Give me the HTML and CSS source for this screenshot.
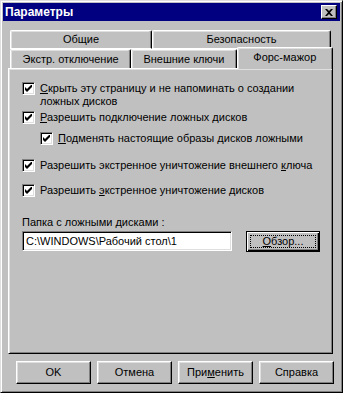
FILE: index.html
```html
<!DOCTYPE html>
<html lang="ru">
<head>
    <meta charset="UTF-8">
    <title>Параметры</title>
    <link rel="stylesheet" href="styles.css">
</head>
<body>
    <div class="window">
        <div class="titlebar">
            <span class="title">Параметры</span>
            <button class="close-btn">
                <svg width="8" height="7" viewBox="0 0 8 7"><path d="M0 0h2l2 2 2-2h2L5 3.5 8 7H6L4 5 2 7H0l3-3.5z" fill="#000"/></svg>
            </button>
        </div>

        <div class="tabs">
            <div class="tab-row back">
                <div class="tab t-general">Общие</div>
                <div class="tab t-security">Безопасность</div>
            </div>
            <div class="tab-row front">
                <div class="tab t-emergency">Экстр. отключение</div>
                <div class="tab t-keys">Внешние ключи</div>
                <div class="tab t-force active">Форс-мажор</div>
            </div>
        </div>

        <div class="panel">
            <label class="check row-1">
                <span class="box"><svg width="7" height="7" viewBox="0 0 7 7"><path d="M0 2v3l2 2 5-5V-1L2 4z" fill="#000"/></svg></span>
                <span class="text"><u>С</u>крыть эту страницу и не напоминать о создании<br>ложных дисков</span>
            </label>
            <label class="check row-2">
                <span class="box"><svg width="7" height="7" viewBox="0 0 7 7"><path d="M0 2v3l2 2 5-5V-1L2 4z" fill="#000"/></svg></span>
                <span class="text"><u>Р</u>азрешить подключение ложных дисков</span>
            </label>
            <label class="check row-3 sub">
                <span class="box"><svg width="7" height="7" viewBox="0 0 7 7"><path d="M0 2v3l2 2 5-5V-1L2 4z" fill="#000"/></svg></span>
                <span class="text"><u>П</u>одменять настоящие образы дисков ложными</span>
            </label>
            <label class="check row-4">
                <span class="box"><svg width="7" height="7" viewBox="0 0 7 7"><path d="M0 2v3l2 2 5-5V-1L2 4z" fill="#000"/></svg></span>
                <span class="text">Разрешить экстренное уничтожение внешнего <u>к</u>люча</span>
            </label>
            <label class="check row-5">
                <span class="box"><svg width="7" height="7" viewBox="0 0 7 7"><path d="M0 2v3l2 2 5-5V-1L2 4z" fill="#000"/></svg></span>
                <span class="text">Разрешить <u>э</u>кстренное уничтожение дисков</span>
            </label>

            <div class="folder-label">Папка с ложными дисками :</div>
            <div class="folder-row">
                <div class="field">C:\WINDOWS\Рабочий стол\1</div>
                <button class="btn browse"><span class="focus"><u>О</u>бзор...</span></button>
            </div>
        </div>

        <div class="buttons">
            <button class="btn">OK</button>
            <button class="btn">Отмена</button>
            <button class="btn">При<u>м</u>енить</button>
            <button class="btn">Справка</button>
        </div>
    </div>
</body>
</html>
```

FILE: styles.css
```css
body {
    margin: 0;
    background-color: #c0c0c0;
    font-family: "Liberation Sans", Arial, sans-serif;
    font-size: 11px;
    line-height: 13px;
    color: #000;
}

.window {
    box-sizing: border-box;
    width: 343px;
    height: 393px;
    padding: 1px;
    background-color: #c0c0c0;
    border-top: 1px solid #dfdfdf;
    border-left: 1px solid #dfdfdf;
    border-right: 1px solid #000;
    border-bottom: 1px solid #000;
    box-shadow: inset 1px 1px 0 #fff, inset -1px -1px 0 #808080;
}

u {
    text-decoration: underline;
    text-underline-offset: 1px;
}

/* Title bar */
.titlebar {
    height: 18px;
    margin: 1px 1px 0 1px;
    background-color: #000080;
    display: flex;
    align-items: center;
    justify-content: space-between;
    padding: 0 3px 0 2px;
}

.title {
    color: #fff;
    font-weight: bold;
    font-size: 12px;
    line-height: 14px;
}

.close-btn {
    box-sizing: border-box;
    width: 16px;
    height: 14px;
    padding: 0;
    background-color: #c0c0c0;
    border-top: 1px solid #fff;
    border-left: 1px solid #fff;
    border-right: 1px solid #000;
    border-bottom: 1px solid #000;
    box-shadow: inset -1px -1px 0 #808080;
    display: flex;
    align-items: center;
    justify-content: center;
}

/* Tabs */
.tabs {
    margin: 9px 0 0 6px;
    width: 325px;
}

.tab-row {
    display: flex;
    margin: 0 2px;
    height: 19px;
}

.tab {
    box-sizing: border-box;
    height: 100%;
    display: flex;
    align-items: center;
    justify-content: center;
    border-top: 1px solid #fff;
    border-left: 1px solid #fff;
    border-right: 1px solid #000;
    border-radius: 2px 2px 0 0;
    box-shadow: inset -1px 0 0 #808080, inset 1px 1px 0 #dfdfdf;
    background-color: #c0c0c0;
    padding-top: 1px;
}

.tab-row.back .tab {
    border-bottom: 1px solid #fff;
    padding-top: 0;
}

.t-general { width: 142px; }
.t-security { width: 179px; }
.t-emergency { width: 122px; }
.t-keys { width: 106px; }
.t-force { width: 93px; }

.tab.active {
    position: relative;
    z-index: 1;
    height: 22px;
    width: 97px;
    margin: -2px -2px -1px 0;
    align-items: flex-start;
    padding-top: 3px;
}

/* Panel */
.panel {
    box-sizing: border-box;
    margin-left: 6px;
    width: 325px;
    height: 286px;
    border-top: 1px solid #fff;
    border-left: 1px solid #fff;
    border-right: 1px solid #000;
    border-bottom: 1px solid #000;
    box-shadow: inset 1px 1px 0 #dfdfdf, inset -1px -1px 0 #808080;
    padding: 0 0 0 13px;
    display: flex;
    flex-direction: column;
    align-items: flex-start;
}

.check {
    display: flex;
    align-items: flex-start;
    gap: 5px;
}

.check .box {
    box-sizing: border-box;
    flex: none;
    width: 13px;
    height: 13px;
    background-color: #fff;
    border-top: 1px solid #808080;
    border-left: 1px solid #808080;
    border-right: 1px solid #fff;
    border-bottom: 1px solid #fff;
    box-shadow: inset 1px 1px 0 #000, inset -1px -1px 0 #dfdfdf;
    display: flex;
    align-items: center;
    justify-content: center;
}

.row-1 { margin-top: 13px; }
.row-2 { margin-top: 3px; }
.row-3 { margin-top: 8px; }
.row-4 { margin-top: 14px; }
.row-5 { margin-top: 12px; }

.check.sub {
    margin-left: 18px;
}

.folder-label {
    margin-top: 19px;
}

.folder-row {
    display: flex;
    align-items: flex-start;
    gap: 14px;
    margin-top: 2px;
}

.field {
    box-sizing: border-box;
    width: 210px;
    height: 20px;
    background-color: #fff;
    border-top: 1px solid #808080;
    border-left: 1px solid #808080;
    border-right: 1px solid #fff;
    border-bottom: 1px solid #fff;
    box-shadow: inset 1px 1px 0 #000, inset -1px -1px 0 #dfdfdf;
    padding: 3px 0 0 3px;
}

/* Buttons */
.btn {
    box-sizing: border-box;
    width: 75px;
    height: 23px;
    padding: 0;
    font-family: inherit;
    font-size: 11px;
    font-weight: normal;
    line-height: 13px;
    color: #000;
    background-color: #c0c0c0;
    border-top: 1px solid #fff;
    border-left: 1px solid #fff;
    border-right: 1px solid #000;
    border-bottom: 1px solid #000;
    box-shadow: inset -1px -1px 0 #808080, inset 1px 1px 0 #dfdfdf;
}

.btn.browse {
    width: 74px;
    height: 21px;
    border: 1px solid #000;
    box-shadow: inset 1px 1px 0 #fff, inset -1px -1px 0 #000, inset -2px -2px 0 #808080;
    display: flex;
    align-items: stretch;
    justify-content: stretch;
    padding: 3px;
}

.browse .focus {
    flex: 1;
    border: 1px dotted #000;
    display: flex;
    align-items: center;
    justify-content: center;
}

.buttons {
    display: flex;
    gap: 6px;
    margin: 7px 0 0 14px;
}
```
